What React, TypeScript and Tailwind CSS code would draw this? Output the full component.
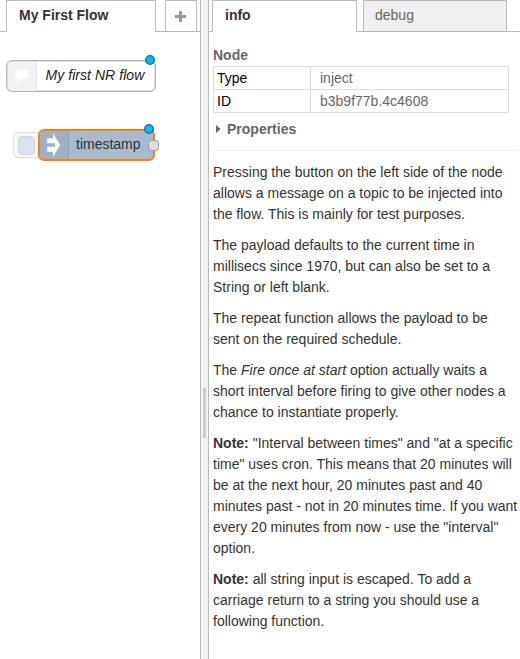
import React from "react";

function Badge({ className }: { className: string }) {
  return (
    <svg className={`absolute ${className}`} width="12" height="12" viewBox="0 0 12 12">
      <circle cx="6" cy="6" r="4.3" fill="#00bcff" stroke="#1b6a94" strokeWidth="1.3" />
    </svg>
  );
}

function CommentNode() {
  return (
    <div className="absolute left-[6px] top-[28px] h-[32px] w-[150px]">
      <div className="flex h-full w-full overflow-hidden rounded-[6px] border border-[#b3b3b3] bg-white shadow-[inset_0_0_0_0.5px_#bbb]">
        <div className="m-[0.5px] flex w-[29.500px] shrink-0 items-center justify-center rounded-l-[5px] border-r border-[#e6e6e6] bg-[#f2f2f2]">
          <svg width="16" height="16" viewBox="0 0 16 16" fill="#fff">
            <path d="M8.600 1.500C12.600 1.500 15.200 3.500 15.200 6.300S12.600 11 8.800 11C8.200 11 7.600 11 7 10.900C5.700 12.600 3.800 13.800 1.600 13.900C2.900 12.800 3.600 11.500 3.700 10C2 9.200 1 7.900 1 6.300C1 3.500 4.300 1.500 8.600 1.500Z" />
          </svg>
        </div>
        <span className="whitespace-nowrap pl-[8px] pt-[4px] text-[14px] italic leading-[20px] tracking-[0.05px] text-[#222]">
          My first NR flow
        </span>
      </div>
      <Badge className="left-[138px] top-[-6px]" />
    </div>
  );
}

function InjectNode() {
  return (
    <div className="absolute left-[13px] top-[97px] h-[32px] w-[147px]">
      <div className="absolute left-0 top-[3px] flex h-[26px] w-[32px] items-center rounded-[5px] border border-[#dcdcdc] bg-[#f7f7f7] pl-[4px]">
        <div className="h-[19px] w-[17px] rounded-[4px] border border-[#d0d7de] bg-[#dae2eb]" />
      </div>
      <div className="absolute left-[25px] top-0 flex h-[32px] w-[117px] overflow-hidden rounded-[6px] border-2 border-[#ff7f0e] bg-[#a6bbcf]">
        <div className="flex w-[29px] shrink-0 items-center border-r border-[#8fa2b5] bg-[#9db1c4] pl-[7px]">
          <svg width="14" height="26" viewBox="0 0 14 26" fill="#fff">
            <path d="M6 1.300 13.300 13 6 24.700V19.700H0.300V14.700H8.200V11.300H0.300V6.300H6Z" />
          </svg>
        </div>
        <span className="pl-[7px] pt-[3px] text-[14px] leading-[20px] text-[#333]">timestamp</span>
      </div>
      <div className="absolute left-[135px] top-[11px] h-[11px] w-[11px] rounded-[3.5px] border border-[#999] bg-[#ddd]" />
      <Badge className="left-[130px] top-[-6px]" />
    </div>
  );
}

function Workspace() {
  return (
    <section className="flex h-full w-[200px] shrink-0 flex-col">
      <div className="flex h-[32px] shrink-0">
        <div className="w-[6px] border-b border-[#bbb]" />
        <div className="w-[150px] border-x border-t border-[#bbb] pl-[12px] pt-[4px] text-[14px] font-bold leading-[20px] text-[#333]">
          My First Flow
        </div>
        <div className="w-[9px] border-b border-[#bbb]" />
        <div className="flex w-[32px] items-center justify-center border border-[#bbb] pr-px">
          <svg width="11" height="11" viewBox="0 0 11 11" fill="#999">
            <path d="M4 0H7V4H11V7H7V11H4V7H0V4H4Z" />
          </svg>
        </div>
        <div className="flex-1 border-b border-[#bbb]" />
      </div>
      <div className="relative flex-1">
        <CommentNode />
        <InjectNode />
      </div>
    </section>
  );
}

function Sidebar() {
  return (
    <section className="flex min-w-0 flex-1 flex-col">
      <div className="flex h-[32px] shrink-0 text-[14px] leading-[20px]">
        <div className="w-[3px] border-b border-[#bbb]" />
        <div className="w-[145px] border-x border-t border-[#bbb] pl-[12px] pt-[4px] font-bold text-[#333]">info</div>
        <div className="w-[6px] border-b border-[#bbb]" />
        <div className="w-[144px] border border-[#bbb] bg-[#f0f0f0] pl-[11px] pt-[4px] text-[#666]">debug</div>
        <div className="flex-1 border-b border-[#bbb]" />
      </div>
      <div className="pl-[4px] pt-[13px] text-[14px] leading-[21px] text-[#333]">
        <h3 className="font-bold text-[#666]">Node</h3>
        <table className="w-[296px] table-fixed border-collapse leading-[22px]">
          <tbody>
            <tr className="h-[23px]">
              <td className="w-[97px] border border-[#ddd] p-0 pl-[3px] text-black">Type</td>
              <td className="border border-[#ddd] p-0 pl-[9px] text-[#666]">inject</td>
            </tr>
            <tr className="h-[23px]">
              <td className="border border-[#ddd] p-0 pl-[3px] text-black">ID</td>
              <td className="border border-[#ddd] p-0 pl-[9px] text-[#666]">b3b9f77b.4c4608</td>
            </tr>
          </tbody>
        </table>
        <div className="mt-[6px] flex h-[21px] items-center font-bold text-[#666]">
          <svg className="-mt-px ml-[3px] mr-[6px]" width="5" height="8" viewBox="0 0 5 8" fill="#666">
            <path d="M0 0 4.500 4 0 8Z" />
          </svg>
          Properties
        </div>
        <hr className="mr-[2px] mt-[10px] border-t border-[#eee]" />
        <div className="flex flex-col gap-[10px] whitespace-nowrap pt-[11px]">
          <p>Pressing the button on the left side of the node<br />allows a message on a topic to be injected into<br />the flow. This is mainly for test purposes.</p>
          <p>The payload defaults to the current time in<br />millisecs since 1970, but can also be set to a<br />String or left blank.</p>
          <p>The repeat function allows the payload to be<br />sent on the required schedule.</p>
          <p>The <em>Fire once at start</em> option actually waits a<br />short interval before firing to give other nodes a<br />chance to instantiate properly.</p>
          <p><b>Note:</b> "Interval between times" and "at a specific<br />time" uses cron. This means that 20 minutes will<br />be at the next hour, 20 minutes past and 40<br />minutes past - not in 20 minutes time. If you want<br />every 20 minutes from now - use the "interval"<br />option.</p>
          <p><b>Note:</b> all string input is escaped. To add a<br />carriage return to a string you should use a<br />following function.</p>
        </div>
      </div>
    </section>
  );
}

export default function App() {
  return (
    <main className="flex h-[659px] w-[520px] overflow-hidden bg-white font-['Liberation_Sans',Arial,sans-serif]">
      <Workspace />
      <div className="flex w-[9px] shrink-0 flex-col items-center border-x border-[#bbb] bg-[#f3f3f3] pt-[388px]">
        <div className="h-[50px] w-[3px] bg-[#ccc]" />
      </div>
      <Sidebar />
    </main>
  );
}
